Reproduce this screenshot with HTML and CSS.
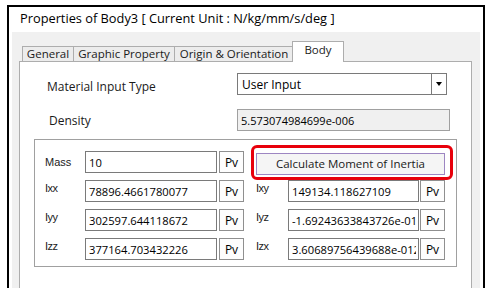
FILE: index.html
```html
<!DOCTYPE html>
<html>
<head>
<meta charset="UTF-8">
<title>Properties of Body3</title>
<link rel="stylesheet" href="styles.css">
</head>
<body>
	<div class="window">
		<div class="title">Properties of Body3 [ Current Unit : N/kg/mm/s/deg ]</div>
		<div class="panel">
			<!-- 탭 -->
			<div class="tabs">
				<span class="tab tab-general">General</span>
				<span class="tab tab-graphic">Graphic Property</span>
				<span class="tab tab-origin">Origin &amp; Orientation</span>
				<span class="tab tab-body active">Body</span>
			</div>
			<div class="tabpage">
				<div class="row row-first">
					<label class="title-lbl">Material Input Type</label>
					<div class="combo">
						<span class="combo-text">User Input</span>
						<span class="combo-btn"><span class="arrow"></span></span>
					</div>
				</div>
				<div class="row row-density">
					<label class="title-lbl lbl-density">Density</label>
					<input type="text" class="density" value="5.573074984699e-006" readonly>
				</div>

				<div class="groupbox">
					<div class="grid">
						<label class="lbl">Mass</label>
						<input type="text" class="myinput" value="10">
						<button class="pv">Pv</button>
						<span class="spacer"></span>
						<div class="calc-wrap">
							<button class="calc">Calculate Moment of Inertia</button>
						</div>

						<label class="lbl lbl-top">Ixx</label>
						<input type="text" class="myinput" value="78896.4661780077">
						<button class="pv">Pv</button>
						<span class="spacer"></span>
						<label class="lbl lbl-top">Ixy</label>
						<input type="text" class="myinput" value="149134.118627109">
						<button class="pv">Pv</button>

						<label class="lbl lbl-top">Iyy</label>
						<input type="text" class="myinput" value="302597.644118672">
						<button class="pv">Pv</button>
						<span class="spacer"></span>
						<label class="lbl lbl-top">Iyz</label>
						<input type="text" class="myinput" value="-1.69243633843726e-012">
						<button class="pv">Pv</button>

						<label class="lbl lbl-top">Izz</label>
						<input type="text" class="myinput" value="377164.703432226">
						<button class="pv">Pv</button>
						<span class="spacer"></span>
						<label class="lbl lbl-top">Izx</label>
						<input type="text" class="myinput" value="3.60689756439688e-012">
						<button class="pv">Pv</button>
					</div>
				</div>
			</div>
		</div>
	</div>
</body>
</html>
```

FILE: styles.css
```css
body {
	margin: 0;
	padding: 0;
	background-color: #fff;
	font-family: "Open Sans", "Noto Sans", sans-serif;
	color: #1a1a1a;
}

.window {
	margin: 5px 0 0 7px;
	width: 474px;
	height: 281px;
	border: solid 2px #000;
	border-bottom: none;
	overflow: hidden;
}

.title {
	height: 25px;
	line-height: 23px;
	padding-left: 11px;
	font-size: 12.8px;
	color: #000;
}

.panel {
	margin-left: 3px;
	width: 453px;
	height: 256px;
	padding: 0 8px 0 7px;
	background-color: #f0f0f0;
	display: flex;
	flex-direction: column;
}

/* 탭 */
.tabs {
	height: 29px;
	display: flex;
	align-items: flex-end;
	padding-left: 3px;
	position: relative;
	z-index: 1;
}

.tab {
	display: inline-block;
	box-sizing: border-box;
	height: 15px;
	line-height: 13px;
	border: solid 1px #adadad;
	border-bottom: none;
	background-color: #ececec;
	font-size: 11.5px;
	text-align: center;
	margin-right: -1px;
}

.tab-general { width: 52px; }
.tab-graphic { width: 102px; }
.tab-origin { width: 120px; }

.tab.active {
	width: 52px;
	line-height: 15px;
	background-color: #fff;
	margin-left: -1px;
	margin-bottom: -1px;
	height: 21px;
}

.tabpage {
	flex: 1;
	background-color: #fff;
	border: solid 1px #adadad;
	border-bottom: none;
}

.row {
	display: flex;
	align-items: center;
}

.row-first {
	margin-top: 11px;
}

.row-density {
	margin-top: 14px;
}

label.title-lbl {
	display: inline-block;
	width: 217px;
	padding-left: 27px;
	box-sizing: border-box;
	font-size: 12px;
	padding-top: 4px;
}

label.lbl-density {
	padding-left: 29px;
	padding-top: 0;
}

.combo {
	box-sizing: border-box;
	width: 210px;
	height: 22px;
	border: solid 1px #7a7a7a;
	display: flex;
	align-items: center;
}

.combo-text {
	flex: 1;
	padding-left: 4px;
	font-size: 12px;
	color: #000;
}

.combo-btn {
	width: 14px;
	height: 20px;
	border-left: solid 1px #7a7a7a;
	display: flex;
	align-items: center;
	justify-content: center;
}

.arrow {
	width: 0;
	height: 0;
	border-left: solid 3.5px transparent;
	border-right: solid 3.5px transparent;
	border-top: solid 4px #000;
}

input {
	font-family: "Open Sans", "Noto Sans", sans-serif;
	color: #000;
	outline: none;
	margin: 0;
}

input.density {
	box-sizing: border-box;
	width: 213px;
	height: 22px;
	padding: 0 3px;
	border: solid 1px #a0a0a0;
	background-color: #f0f0f0;
	font-size: 11px;
}

.groupbox {
	box-sizing: border-box;
	width: 423px;
	height: 128px;
	margin: 8px 0 0 14px;
	border: solid 1px #a0a0a0;
	padding: 11px 0 0 10px;
}

.grid {
	display: grid;
	grid-template-columns: 40px 132px 27px 12px 32px 131px 26px;
	grid-template-rows: 22px 22px 22px 22px;
	row-gap: 7px;
}

label.lbl {
	font-family: "Liberation Sans", Arial, sans-serif;
	font-size: 11px;
	color: #222;
	align-self: center;
}

label.lbl-top {
	align-self: start;
	padding-top: 2px;
	letter-spacing: -0.5px;
}

input.myinput {
	box-sizing: border-box;
	width: 100%;
	height: 22px;
	padding: 0 2px 0 3px;
	border: solid 1px #7a7a7a;
	background-color: #fff;
	font-size: 11.2px;
}

button.pv {
	justify-self: end;
	width: 25px;
	height: 22px;
	padding: 0;
	border: solid 1px #8f8f8f;
	background-color: #fdfdfd;
	font-family: "Open Sans", "Noto Sans", sans-serif;
	font-size: 12px;
	color: #000;
}

.calc-wrap {
	grid-column: 5 / 8;
	position: relative;
}

button.calc {
	box-sizing: border-box;
	width: 100%;
	height: 22px;
	padding: 0;
	border: solid 1px #9d86c2;
	background-color: #f5f5f5;
	font-family: "Open Sans", "Noto Sans", sans-serif;
	font-size: 11.5px;
	color: #1a1a1a;
}

/* 강조 표시 */
.calc-wrap::after {
	content: "";
	position: absolute;
	left: -5px;
	top: -6px;
	right: -8px;
	bottom: -7px;
	border: solid 3px #e8000b;
	border-radius: 6px;
}
```
